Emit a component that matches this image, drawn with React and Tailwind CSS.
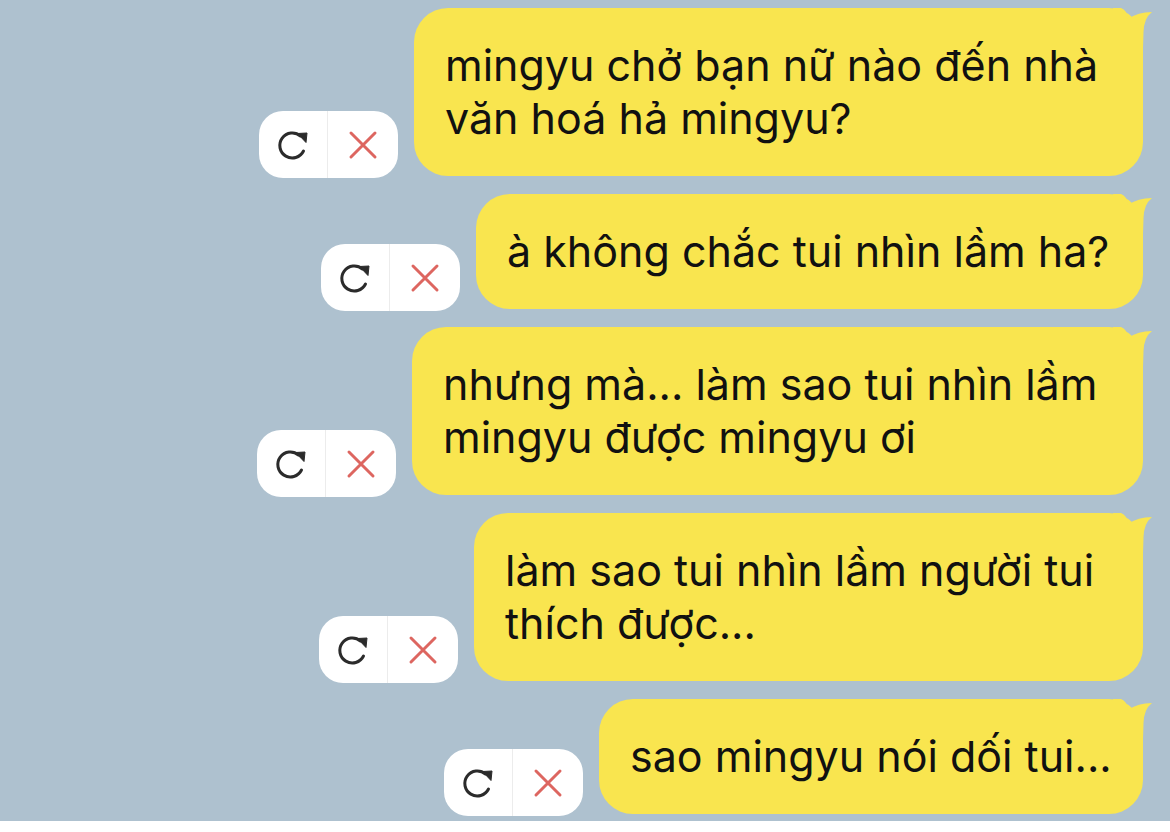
import React from 'react';

const messages = [
  { lines: ['mingyu chở bạn nữ nào đến nhà', 'văn hoá hả mingyu?'], width: 729 },
  { lines: ['à không chắc tui nhìn lầm ha?'], width: 667 },
  { lines: ['nhưng mà... làm sao tui nhìn lầm', 'mingyu được mingyu ơi'], width: 731 },
  { lines: ['làm sao tui nhìn lầm người tui', 'thích được...'], width: 669 },
  { lines: ['sao mingyu nói dối tui...'], width: 544 },
];

// circular arrow, clockwise, head at top right
const RetryIcon = () => (
  <svg width="34" height="34" viewBox="0 0 34 34" fill="none">
    <path
      d="M26.5 23 A12.5 12.5 0 1 1 23.5 8"
      stroke="#2b2b2b"
      strokeWidth="3"
      strokeLinecap="round"
    />
    <path d="M20.5 5.5 L30 5 L29 14.5 Z" fill="#2b2b2b" strokeLinejoin="round" stroke="#2b2b2b" strokeWidth="1" />
  </svg>
);

const CloseIcon = () => (
  <svg width="30" height="30" viewBox="0 0 30 30" fill="none">
    <path d="M3 3 L27 27 M27 3 L3 27" stroke="#dd6660" strokeWidth="3" strokeLinecap="round" />
  </svg>
);

const Tail = () => (
  <svg
    className="absolute top-0 right-[-10px]"
    width="40"
    height="40"
    viewBox="0 0 40 40"
  >
    <path
      d="M0 0 L8 0 Q14 2 15 11 Q25 4 39 4 Q31 10 30.5 24 L30 40 L0 40 Z"
      fill="#f9e54f"
    />
  </svg>
);

const Actions = () => (
  <div className="flex h-[67px] w-[139px] mb-[-2px] shrink-0 rounded-[24px] bg-white">
    <button className="flex w-[69px] items-center justify-center border-r border-[#ececec] pl-[2px]">
      <RetryIcon />
    </button>
    <button className="flex flex-1 items-center justify-center">
      <CloseIcon />
    </button>
  </div>
);

export default function App() {
  return (
    <div className="w-[1170px] bg-white" style={{ fontFamily: 'Inter, "Noto Sans", sans-serif' }}>
      <div className="flex h-[821px] flex-col items-end gap-[18px] overflow-hidden bg-[#aec1cf] pt-[8px] pr-[27px]">
        {messages.map((m, i) => (
          <div key={i} className="flex items-end gap-[16px]">
            <Actions />
            <div
              className="relative rounded-[34px] bg-[#f9e54f] py-[31px] pl-[31px] text-[43px] leading-[53px] text-[#111] whitespace-nowrap"
              style={{ width: m.width }}
            >
              <Tail />
              {m.lines.map((l, j) => (
                <div key={j} className="relative">{l}</div>
              ))}
            </div>
          </div>
        ))}
      </div>
    </div>
  );
}
